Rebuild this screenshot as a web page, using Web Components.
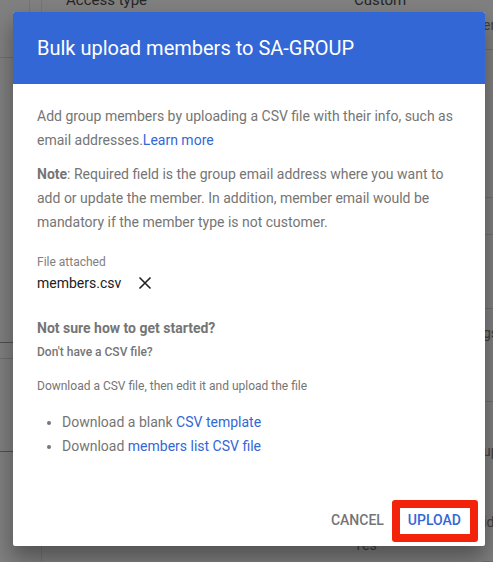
<!DOCTYPE html>
<html lang="en">
<head>
<meta charset="utf-8">
<meta name="viewport" content="width=device-width, initial-scale=1">
<title>Bulk upload members</title>
<style>
  body { margin: 0; font-family: Roboto, "Liberation Sans", sans-serif; background: #808080; }
</style>
</head>
<body>
<group-page>
  <upload-dialog heading="Bulk upload members to SA-GROUP">
    <p>Add group members by uploading a CSV file with their info, such as email addresses.<text-link href="#learn">Learn more</text-link></p>
    <p><b>Note</b>: Required field is the group email address where you want to add or update the member. In addition, member email would be mandatory if the member type is not customer.</p>
    <attached-file name="members.csv"></attached-file>
    <start-help></start-help>
    <dialog-button slot="actions">CANCEL</dialog-button>
    <dialog-button slot="actions" primary>UPLOAD</dialog-button>
  </upload-dialog>
</group-page>
<script>
const define = (name, html, setup) => customElements.define(name, class extends HTMLElement {
  constructor() {
    super();
    this.attachShadow({ mode: "open" }).innerHTML = html.trim();
  }
  connectedCallback() { if (setup) setup(this, this.shadowRoot); }
});

define("page-backdrop", `
  <style>
    :host { display: grid; grid-template-columns: 30px minmax(0, 1fr); column-gap: 11px; height: 100%; overflow: hidden; color: #262626; font-size: 15px; line-height: 20px; }
    .rail { display: flex; flex-direction: column; }
    .rail div { box-sizing: border-box; border-bottom: 1px solid #707070; }
    .r1 { height: 58px; border-right: 1px solid #757575; }
    .rail .r2 { height: 285px; border-bottom-color: #505050; }
    .rail .r3 { height: 94px; margin-top: 15px; border-top: 1px solid #6e6e6e; border-bottom-color: #505050; }
    .main { border-left: 1px solid #757575; display: grid; grid-template-columns: 24px 288px 129px minmax(0, 1fr); }
    .col { display: flex; flex-direction: column; overflow: hidden; white-space: nowrap; }
    .top { margin-top: -10px; }
    .yes { margin-top: 525px; font-size: 14px; color: #404040; }
    .side div { box-sizing: border-box; border-bottom: 1px solid #707070; color: #404040; flex: none; font-size: 14px; }
    .a { height: 50px; padding-top: 15px; }
    .b { height: 148px; }
    .c { height: 37px; }
    .d { height: 74px; }
    .e { height: 93px; padding-top: 14px; }
    .f { height: 160px; padding-top: 39px; }
    .f span { display: block; margin-bottom: 51px; }
  </style>
  <div class="rail"><div class="r1"></div><div class="r2"></div><div class="r3"></div></div>
  <div class="main">
    <div></div>
    <div class="col"><span class="top">Access type</span></div>
    <div class="col"><span class="top">Custom</span><span class="yes">Yes</span></div>
    <div class="col side">
      <div class="a">er</div><div class="b"></div><div class="c"></div><div class="d"></div>
      <div class="e">gs</div><div class="f"><span>up</span><span>id</span></div>
    </div>
  </div>`);

define("group-page", `
  <style>
    :host { display: grid; min-height: 100vh; }
    page-backdrop, main { grid-area: 1 / 1; min-width: 0; }
    page-backdrop { height: 100vh; min-height: 100%; }
    main { display: grid; padding: 12px 8px 16px 13px; z-index: 1; }
  </style>
  <page-backdrop aria-hidden="true"></page-backdrop>
  <main><slot></slot></main>`);

define("upload-dialog", `
  <style>
    :host { display: flex; flex-direction: column; background: #fff; border-radius: 2px; box-shadow: 0 12px 22px 1px rgba(0,0,0,.36); color: #757575; font-size: 14px; line-height: 24px; }
    header { background: #3367d6; border-radius: 2px 2px 0 0; padding: 24px; }
    h1 { margin: 0; color: #fff; font-size: 20px; line-height: 24px; font-weight: 400; }
    .body { padding: 20px 24px 0; flex: 1; }
    ::slotted(p) { margin: 0 0 10px; }
    footer { display: flex; justify-content: flex-end; gap: 8px; padding: 0 7px 4px; align-items: center; }
  </style>
  <header><h1></h1></header>
  <div class="body"><slot></slot></div>
  <footer><slot name="actions"></slot></footer>`,
  (el, root) => {
    el.setAttribute("role", "dialog");
    el.setAttribute("aria-label", el.getAttribute("heading"));
    root.querySelector("h1").textContent = el.getAttribute("heading");
  });

define("text-link", `
  <style>
    :host { display: inline; }
    a { color: #3367d6; text-decoration: none; }
  </style><a><slot></slot></a>`,
  (el, root) => { root.querySelector("a").href = el.getAttribute("href"); });

define("attached-file", `
  <style>
    :host { display: block; margin-top: 18px; }
    .label { font-size: 12px; line-height: 20px; color: #808080; }
    .row { display: flex; align-items: center; gap: 16px; color: #212121; line-height: 22px; }
    button { border: 0; padding: 0; background: none; width: 16px; height: 16px; color: #212121; }
    svg { display: block; }
  </style>
  <div class="label">File attached</div>
  <div class="row"><span></span><button aria-label="Remove file"><svg width="16" height="16" viewBox="0 0 16 16" fill="none" stroke="currentColor" stroke-width="1.6"><path d="M2.5 2.5l11 11M13.5 2.5l-11 11"/></svg></button></div>`,
  (el, root) => { root.querySelector("span").textContent = el.getAttribute("name"); });

define("start-help", `
  <style>
    :host { display: block; margin-top: 22px; }
    h2, h3, p, ul { margin: 0; }
    h2 { font-size: 14px; line-height: 24px; font-weight: 700; }
    h3 { font-size: 12px; line-height: 24px; font-weight: 500; }
    p { font-size: 12px; line-height: 24px; margin-top: 10px; }
    ul { margin-top: 12px; padding-left: 25px; }
  </style>
  <h2>Not sure how to get started?</h2>
  <h3>Don't have a CSV file?</h3>
  <p>Download a CSV file, then edit it and upload the file</p>
  <ul>
    <li>Download a blank <text-link href="#template">CSV template</text-link></li>
    <li>Download <text-link href="#members">members list CSV file</text-link></li>
  </ul>`);

define("dialog-button", `
  <style>
    :host { display: block; }
    button { display: block; border: 0; background: #fff; color: #757575; font: 500 14px/24px Roboto, "Liberation Sans", sans-serif; padding: 8px 0 10px; }
    :host([primary]) button { color: #3367d6; border: 8px solid #f3220b; border-radius: 3px; padding: 0 9px 2px 8px; }
  </style><button type="button"><slot></slot></button>`);
</script>
</body>
</html>
